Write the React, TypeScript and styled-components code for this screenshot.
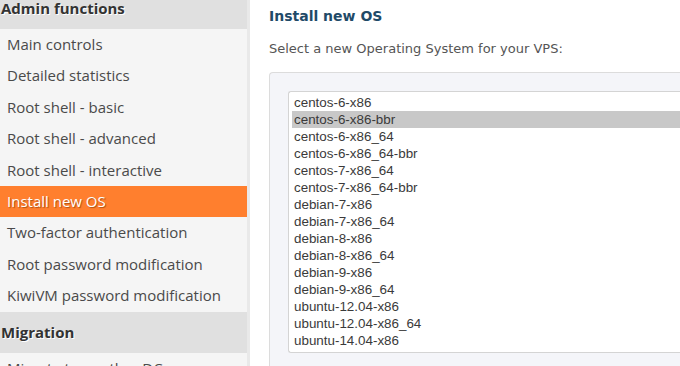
import React from "react";
import styled, { createGlobalStyle } from "styled-components";

const Global = createGlobalStyle`
  html, body { margin: 0; padding: 0; background: #fff; overflow: hidden; }
  * { box-sizing: border-box; }
`;

const Page = styled.div`
  display: flex;
  align-items: flex-start;
  margin-top: -12px;
  width: 680px;
  height: 378px;
  overflow: hidden;
`;

const Sidebar = styled.nav`
  width: 250px;
  flex: none;
  background: #f5f5f5;
  border-right: 3px solid #e9e9e9;
  font-family: "Open Sans", "Noto Sans", sans-serif;
  font-size: 15px;
  align-self: stretch;
`;

const GroupTitle = styled.div`
  background: #e0e0e0;
  color: #333;
  font-weight: 700;
  font-size: 15px;
  line-height: 21px;
  padding: 10px 0 10px 1px;
  text-shadow: 1px 1px 0 #fff;
`;

const NavItem = styled.div<{ $active?: boolean }>`
  padding: 5px 7px;
  line-height: 21.4px;
  color: ${(p) => (p.$active ? "#fff" : "#4a4a4a")};
  background: ${(p) => (p.$active ? "#ff7f2e" : "transparent")};
  text-shadow: ${(p) => (p.$active ? "1px 1px 1px rgba(120,50,0,0.6)" : "none")};
  white-space: nowrap;
`;

const Main = styled.main`
  flex: 1;
  padding: 19px 0 0 19px;
  min-width: 0;
`;

const Heading = styled.h3`
  margin: 0;
  font-family: "DejaVu Sans", Verdana, sans-serif;
  font-weight: 700;
  font-size: 14px;
  line-height: 18px;
  color: #1f4a68;
`;

const Lead = styled.p`
  margin: 15px 0 0;
  font-family: "DejaVu Sans", Verdana, sans-serif;
  font-size: 13px;
  line-height: 17px;
  color: #555;
`;

const Panel = styled.div`
  margin-top: 15px;
  background: #f4f5f9;
  border: 1px solid #dcdcdc;
  border-right: none;
  border-radius: 4px 0 0 4px;
  padding: 18px 0 20px 18px;
`;

const ListBox = styled.div`
  height: 262px;
  background: #fff;
  border: 1px solid #d4d4d4;
  border-right: none;
  border-radius: 3px 0 0 3px;
  padding: 2px 0 0 3px;
  overflow: hidden;
  font-family: "Liberation Sans", Arial, sans-serif;
  font-size: 13.4px;
`;

const Option = styled.div<{ $selected?: boolean }>`
  height: 17px;
  line-height: 17px;
  padding-left: 2px;
  color: #3a3a3a;
  background: ${(p) => (p.$selected ? "#c8c8c8" : "transparent")};
  white-space: nowrap;
`;

const adminItems = [
  "Main controls",
  "Detailed statistics",
  "Root shell - basic",
  "Root shell - advanced",
  "Root shell - interactive",
  "Install new OS",
  "Two-factor authentication",
  "Root password modification",
  "KiwiVM password modification",
];

const osList = [
  "centos-6-x86",
  "centos-6-x86-bbr",
  "centos-6-x86_64",
  "centos-6-x86_64-bbr",
  "centos-7-x86_64",
  "centos-7-x86_64-bbr",
  "debian-7-x86",
  "debian-7-x86_64",
  "debian-8-x86",
  "debian-8-x86_64",
  "debian-9-x86",
  "debian-9-x86_64",
  "ubuntu-12.04-x86",
  "ubuntu-12.04-x86_64",
  "ubuntu-14.04-x86",
  "ubuntu-14.04-x86_64",
  "ubuntu-16.04-x86_64",
];

export default function App() {
  return (
    <>
      <Global />
      <Page>
        <Sidebar>
          <GroupTitle>Admin functions</GroupTitle>
          {adminItems.map((t) => (
            <NavItem key={t} $active={t === "Install new OS"}>
              {t}
            </NavItem>
          ))}
          <GroupTitle>Migration</GroupTitle>
          <NavItem>Migrate to another DC</NavItem>
        </Sidebar>
        <Main>
          <Heading>Install new OS</Heading>
          <Lead>Select a new Operating System for your VPS:</Lead>
          <Panel>
            <ListBox role="listbox">
              {osList.map((o) => (
                <Option key={o} $selected={o === "centos-6-x86-bbr"}>
                  {o}
                </Option>
              ))}
            </ListBox>
          </Panel>
        </Main>
      </Page>
    </>
  );
}
